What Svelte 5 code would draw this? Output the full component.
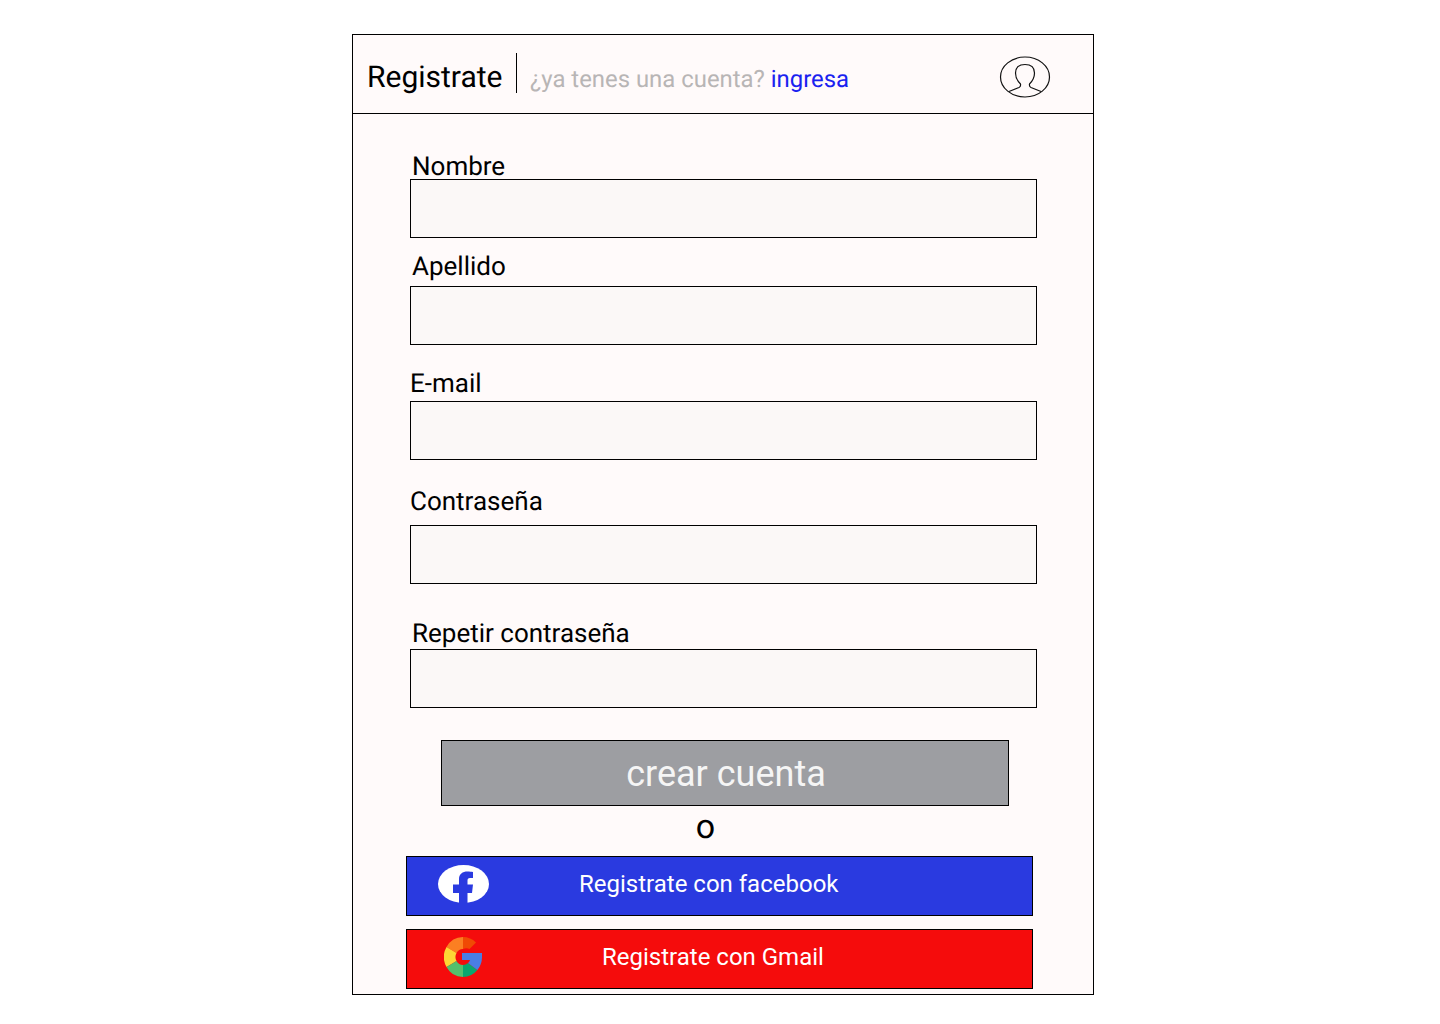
<script>
	const fields = [
		{ id: 'nombre', label: 'Nombre', type: 'text', variant: 'first' },
		{ id: 'apellido', label: 'Apellido', type: 'text', variant: 'second' },
		{ id: 'email', label: 'E-mail', type: 'email', variant: 'third' },
		{ id: 'password', label: 'Contraseña', type: 'password', variant: 'fourth' },
		{ id: 'repeat', label: 'Repetir contraseña', type: 'password', variant: 'fifth' }
	];
</script>

<main class="card">
	<header class="head">
		<h1 class="title">Registrate</h1>
		<p class="hint">¿ya tenes una cuenta? <a href="#ingresa" class="hint-link">ingresa</a></p>
		<svg class="avatar" viewBox="0 0 52 42" width="52" height="42" fill="none" stroke="#111" stroke-width="1.2" aria-hidden="true">
			<ellipse cx="26" cy="21" rx="24.5" ry="20" />
			<path d="M10 35.5 L20 31.5 Q22 30.5 21.5 28 Q16.5 23 16.5 17 Q16.5 8.5 26 8.5 Q35.5 8.5 35.5 17 Q35.5 23 30.5 28 Q30 30.5 32 31.5 L42 35.5" />
		</svg>
	</header>

	<form class="body" onsubmit={(e) => e.preventDefault()}>
		{#each fields as field (field.id)}
			<div class="field {field.variant}">
				<label class="label" for={field.id}>{field.label}</label>
				<input class="input" id={field.id} type={field.type} />
			</div>
		{/each}

		<button class="create" type="submit">crear cuenta</button>
		<div class="or">o</div>

		<button class="social facebook" type="button">
			<svg viewBox="0 0 51 38" width="51" height="38" aria-hidden="true">
				<ellipse cx="25.5" cy="19" rx="25.5" ry="19" fill="#fff" />
				<path d="M21 38 V28 H15 V19.5 H21 V14 C21 9 24.5 6.5 29.5 6.5 C31.5 6.5 33.5 6.8 35 7 V13 H32 C30 13 29.5 14 29.5 15.5 V19.5 H35 L34 28 H29.5 V38 Z" fill="#2a3ae0" />
			</svg>
			<span>Registrate con facebook</span>
		</button>

		<button class="social gmail" type="button">
			<svg viewBox="0 0 38 40" width="38" height="40" aria-hidden="true">
				<path d="M2.5 10 A19 20 0 0 1 19 0 V12 A7.5 8 0 0 0 12.5 16 Z" fill="#fb7f22" />
				<path d="M19 0 A19 20 0 0 1 32 5.5 L25.5 12 A7.5 8 0 0 0 19 12 Z" fill="#f04a04" />
				<path d="M2.5 10 L12.5 16 A7.5 8 0 0 0 12.5 24 L2.5 30 A19 20 0 0 1 2.5 10 Z" fill="#fdd735" />
				<path d="M2.5 30 L12.5 24 A7.5 8 0 0 0 19 28 V40 A19 20 0 0 1 2.5 30 Z" fill="#54c06c" />
				<path d="M19 28 A7.5 8 0 0 0 24 26 L33.4 33 A19 20 0 0 1 19 40 Z" fill="#0ba66f" />
				<path d="M18 16 H38 V20 A19 20 0 0 1 33.4 33 L24 26 A7.5 8 0 0 0 26 23 H18 Z" fill="#4a7ee4" />
			</svg>
			<span>Registrate con Gmail</span>
		</button>
	</form>
</main>

<style>
	:global(body) {
		background: #fff;
		font-family: Roboto, 'Liberation Sans', sans-serif;
		text-rendering: geometricPrecision;
	}

	.card {
		box-sizing: border-box;
		width: 742px;
		height: 961px;
		margin: 34px 0 0 352px;
		background: #fffafa;
		border: 1px solid #000;
		display: flex;
		flex-direction: column;
	}

	.head {
		box-sizing: border-box;
		height: 79px;
		flex: none;
		border-bottom: 1px solid #000;
		display: flex;
		align-items: flex-start;
		padding: 18px 0 0 14px;
	}

	.title {
		margin: 0;
		padding-right: 14px;
		height: 40px;
		border-right: 1px solid #000;
		font-size: 30px;
		font-weight: 400;
		line-height: 50px;
		color: #000;
	}

	.hint {
		margin: 0 0 0 12.5px;
		font-size: 23.9px;
		line-height: 52px;
		color: #b8b5b5;
	}

	.hint-link {
		color: #1a22f0;
		text-decoration: none;
	}

	.avatar {
		margin: 3px 42px 0 auto;
	}

	.body {
		flex: 1;
		display: flex;
		flex-direction: column;
		padding: 37px 0 0 53px;
	}

	.field {
		padding-left: 4px;
	}

	.label {
		display: block;
		height: 28px;
		font-size: 26px;
		line-height: 30px;
		color: #000;
	}

	.first .label,
	.second .label,
	.fifth .label {
		padding-left: 2px;
	}

	.first .label {
		line-height: 32px;
	}

	.fifth .label {
		line-height: 26px;
	}

	.second {
		margin-top: 14px;
	}

	.second .label {
		margin-bottom: 6px;
	}

	.third {
		margin-top: 24px;
	}

	.third .label {
		margin-bottom: 4px;
	}

	.fourth {
		margin-top: 27px;
	}

	.fourth .label {
		margin-bottom: 10px;
	}

	.fifth {
		margin-top: 37px;
	}

	.input {
		display: block;
		box-sizing: border-box;
		width: 627px;
		height: 59px;
		margin: 0;
		padding: 0 8px;
		background: #fbf8f7;
		border: 1px solid #000;
		border-radius: 0;
		outline: none;
	}

	.create {
		box-sizing: border-box;
		width: 568px;
		height: 66px;
		margin: 32px 0 0 35px;
		padding: 2px 0 0 2px;
		background: #9d9ea2;
		border: 1px solid #000;
		color: #f5f5f5;
		font-family: inherit;
		font-size: 36px;
		cursor: pointer;
	}

	.or {
		height: 50px;
		width: 599px;
		text-align: center;
		font-size: 34px;
		line-height: 42px;
		color: #000;
	}

	.social {
		box-sizing: border-box;
		width: 627px;
		height: 60px;
		flex: none;
		display: flex;
		align-items: center;
		margin: 0;
		border: 1px solid #000;
		color: #fff;
		font-family: inherit;
		font-size: 24px;
		cursor: pointer;
	}

	.facebook {
		background: #2a3ae0;
		padding: 0 0 4px 31px;
	}

	.facebook span {
		margin-left: 90px;
	}

	.gmail {
		background: #f50c0c;
		margin-top: 13px;
		padding: 0 0 4px 37px;
	}

	.gmail span {
		margin-left: 120px;
	}
</style>
